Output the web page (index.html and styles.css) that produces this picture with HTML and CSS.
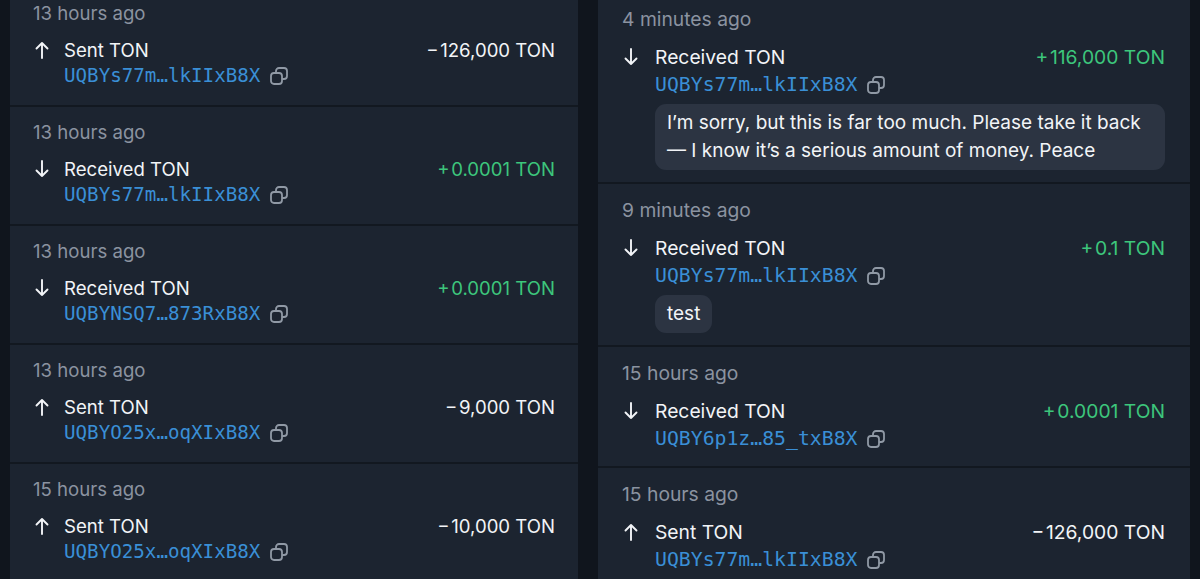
FILE: index.html
```html
<!DOCTYPE html>
<html lang="en">
<head>
    <meta charset="UTF-8">
    <meta name="viewport" content="width=device-width, initial-scale=1.0">
    <title>Transactions</title>
    <link rel="stylesheet" href="styles.css">
</head>
<body>

    <svg width="0" height="0" class="defs">
        <symbol id="up" viewBox="0 0 14 18">
            <path d="M7 17V2M1.5 7.5L7 2l5.5 5.5" fill="none" stroke="currentColor" stroke-width="1.9" stroke-linecap="round" stroke-linejoin="round"/>
        </symbol>
        <symbol id="down" viewBox="0 0 14 18">
            <path d="M7 1v15M1.5 10.5L7 16l5.5-5.5" fill="none" stroke="currentColor" stroke-width="1.9" stroke-linecap="round" stroke-linejoin="round"/>
        </symbol>
        <symbol id="copy" viewBox="0 0 20 20">
            <rect x="7" y="2" width="11" height="11" rx="3" fill="none" stroke="currentColor" stroke-width="1.8"/>
            <rect x="2" y="7" width="11" height="11" rx="3" fill="#1c2430" stroke="currentColor" stroke-width="1.8"/>
        </symbol>
    </svg>

    <div class="page">
        <section class="panel panel-left">
            <div class="row">
                <div class="time">13 hours ago</div>
                <svg class="arrow"><use href="#up"/></svg>
                <div class="title">Sent TON</div>
                <div class="amount">&minus;&#8202;126,000 TON</div>
                <div class="address">UQBYs77m…lkIIxB8X <svg class="copy"><use href="#copy"/></svg></div>
            </div>
            <div class="row">
                <div class="time">13 hours ago</div>
                <svg class="arrow"><use href="#down"/></svg>
                <div class="title">Received TON</div>
                <div class="amount plus">+&#8202;0.0001 TON</div>
                <div class="address">UQBYs77m…lkIIxB8X <svg class="copy"><use href="#copy"/></svg></div>
            </div>
            <div class="row">
                <div class="time">13 hours ago</div>
                <svg class="arrow"><use href="#down"/></svg>
                <div class="title">Received TON</div>
                <div class="amount plus">+&#8202;0.0001 TON</div>
                <div class="address">UQBYNSQ7…873RxB8X <svg class="copy"><use href="#copy"/></svg></div>
            </div>
            <div class="row">
                <div class="time">13 hours ago</div>
                <svg class="arrow"><use href="#up"/></svg>
                <div class="title">Sent TON</div>
                <div class="amount">&minus;&#8202;9,000 TON</div>
                <div class="address">UQBYO25x…oqXIxB8X <svg class="copy"><use href="#copy"/></svg></div>
            </div>
            <div class="row">
                <div class="time">15 hours ago</div>
                <svg class="arrow"><use href="#up"/></svg>
                <div class="title">Sent TON</div>
                <div class="amount">&minus;&#8202;10,000 TON</div>
                <div class="address">UQBYO25x…oqXIxB8X <svg class="copy"><use href="#copy"/></svg></div>
            </div>
        </section>

        <section class="panel panel-right">
            <div class="row">
                <div class="time">4 minutes ago</div>
                <svg class="arrow"><use href="#down"/></svg>
                <div class="title">Received TON</div>
                <div class="amount plus">+&#8202;116,000 TON</div>
                <div class="address">UQBYs77m…lkIIxB8X <svg class="copy"><use href="#copy"/></svg></div>
                <div class="comment">I’m sorry, but this is far too much. Please take it back — I know it’s a serious amount of money. Peace</div>
            </div>
            <div class="row">
                <div class="time">9 minutes ago</div>
                <svg class="arrow"><use href="#down"/></svg>
                <div class="title">Received TON</div>
                <div class="amount plus">+&#8202;0.1 TON</div>
                <div class="address">UQBYs77m…lkIIxB8X <svg class="copy"><use href="#copy"/></svg></div>
                <div class="comment">test</div>
            </div>
            <div class="row">
                <div class="time">15 hours ago</div>
                <svg class="arrow"><use href="#down"/></svg>
                <div class="title">Received TON</div>
                <div class="amount plus">+&#8202;0.0001 TON</div>
                <div class="address">UQBY6p1z…85_txB8X <svg class="copy"><use href="#copy"/></svg></div>
            </div>
            <div class="row">
                <div class="time">15 hours ago</div>
                <svg class="arrow"><use href="#up"/></svg>
                <div class="title">Sent TON</div>
                <div class="amount">&minus;&#8202;126,000 TON</div>
                <div class="address">UQBYs77m…lkIIxB8X <svg class="copy"><use href="#copy"/></svg></div>
            </div>
        </section>
    </div>

</body>
</html>
```

FILE: styles.css
```css
body {
    margin: 0;
    height: 579px;
    overflow: hidden;
    background-color: #10151d;
    color: #f2f4f7;
    font-family: Inter, "Noto Sans", sans-serif;
}
.defs {
    position: absolute;
}
.page {
    display: flex;
    gap: 20px;
    padding: 0 10px;
    height: 579px;
}
.panel {
    background-color: #1c2430;
    overflow: hidden;
}
.panel-left {
    width: 568px;
    font-size: 18.6px;
}
.panel-right {
    width: 592px;
    font-size: 19.3px;
}
.row {
    display: grid;
    grid-template-columns: 31px 1fr auto;
    align-items: center;
    padding: 13px 23px 15px 23px;
    border-bottom: 2px solid #121820;
}
.panel-left .row:first-child {
    margin-top: -12px;
}
.time {
    grid-column: 1 / -1;
    color: #8b93a0;
    line-height: 24px;
    margin-bottom: 13px;
}
.arrow {
    width: 14px;
    height: 18px;
    margin-left: 2px;
    color: #f2f4f7;
}
.title {
    line-height: 24px;
}
.amount {
    line-height: 24px;
    text-align: right;
}
.amount.plus {
    color: #3dc67c;
}
.address {
    grid-column: 2 / -1;
    display: flex;
    align-items: center;
    gap: 9px;
    font-family: "DejaVu Sans Mono", "Liberation Mono", monospace;
    font-size: 19.2px;
    line-height: 28px;
    color: #3a8fd6;
}
.copy {
    width: 20px;
    height: 20px;
    color: #9099a5;
}

/* right panel is a slightly larger screenshot */
.panel-right .row {
    grid-template-columns: 33px 1fr auto;
    padding: 13px 25px 12px 24px;
}
.panel-right .row:first-child {
    margin-top: -7px;
}
.panel-right .time {
    line-height: 26px;
    margin-bottom: 12px;
}
.panel-right .title,
.panel-right .amount {
    line-height: 26px;
}
.panel-right .address {
    font-size: 19.8px;
    line-height: 30px;
}
.comment {
    grid-column: 2 / -1;
    justify-self: start;
    margin-top: 4px;
    padding: 5px 12px;
    background-color: #2c3442;
    border-radius: 11px;
    line-height: 28px;
    font-size: 19px;
}
```
